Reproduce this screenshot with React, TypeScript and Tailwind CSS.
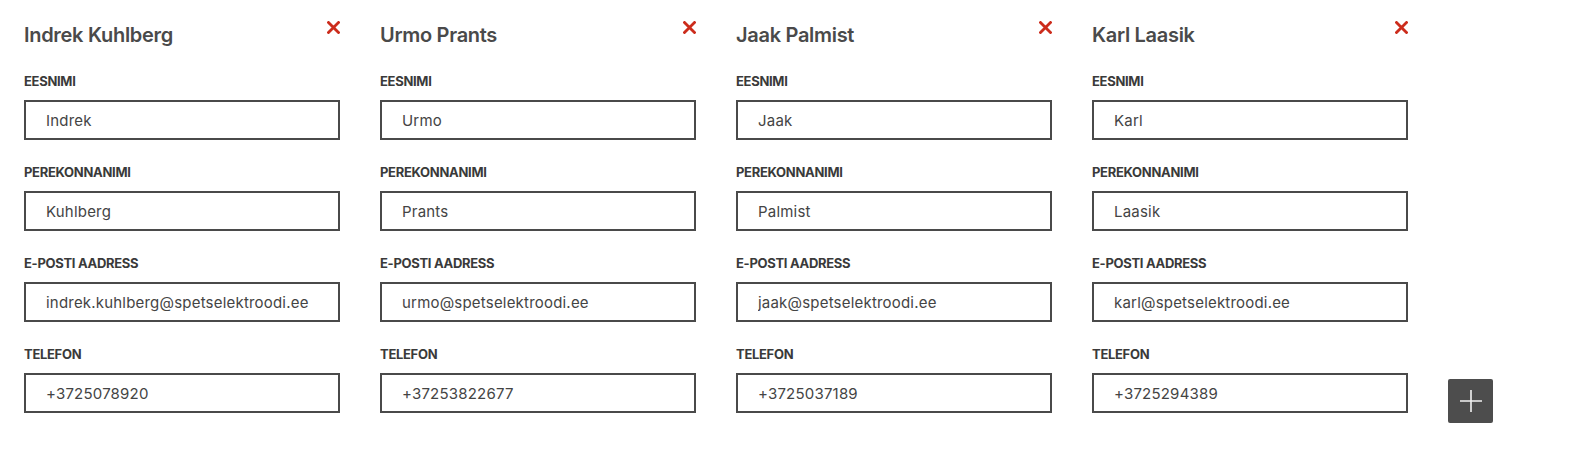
import React from 'react'

type Contact = {
  first: string
  last: string
  email: string
  phone: string
}

const contacts: Contact[] = [
  { first: 'Indrek', last: 'Kuhlberg', email: 'indrek.kuhlberg@spetselektroodi.ee', phone: '+3725078920' },
  { first: 'Urmo', last: 'Prants', email: 'urmo@spetselektroodi.ee', phone: '+37253822677' },
  { first: 'Jaak', last: 'Palmist', email: 'jaak@spetselektroodi.ee', phone: '+3725037189' },
  { first: 'Karl', last: 'Laasik', email: 'karl@spetselektroodi.ee', phone: '+3725294389' },
]

function Field({ label, value }: { label: string; value: string }) {
  return (
    <div className="mb-[24px]">
      <div className="mb-[11px] text-[13px] font-bold uppercase leading-4 tracking-[-0.3px] text-[#3a3a3a]">{label}</div>
      <input
        readOnly
        value={value}
        className="h-[40px] w-full border-2 border-[#4a4a4a] bg-white pl-5 text-[15px] tracking-[0.2px] text-[#444] outline-none"
      />
    </div>
  )
}

function RemoveIcon() {
  return (
    <svg width="13" height="13" viewBox="0 0 13 13" className="block">
      <path d="M1.5 1.5 L11.5 11.5 M11.5 1.5 L1.5 11.5" stroke="#cc2c1c" strokeWidth="2.8" strokeLinecap="square" />
    </svg>
  )
}

export default function App() {
  return (
    <div className="flex min-h-[454px] gap-10 bg-white pl-6 pt-[21px]" style={{ fontFamily: '"Inter", "Liberation Sans", sans-serif' }}>
      {contacts.map(c => (
        <div key={c.first} className="w-[316px]">
          <div className="mb-[26px] flex items-start justify-between">
            <h2 className="pt-[2px] text-[20px] font-semibold leading-6 tracking-[-0.3px] text-[#4a4a4a]">
              {c.first} {c.last}
            </h2>
            <button className="cursor-pointer">
              <RemoveIcon />
            </button>
          </div>
          <Field label="Eesnimi" value={c.first} />
          <Field label="Perekonnanimi" value={c.last} />
          <Field label="E-posti aadress" value={c.email} />
          <Field label="Telefon" value={c.phone} />
        </div>
      ))}
      <button className="mt-[358px] flex h-[44px] w-[45px] items-center justify-center self-start rounded-[2px] bg-[#4d4d4d]">
        <svg width="22" height="22" viewBox="0 0 22 22">
          <path d="M11 0 V22 M0 11 H22" stroke="#f2f2f2" strokeWidth="1.6" />
        </svg>
      </button>
    </div>
  )
}
